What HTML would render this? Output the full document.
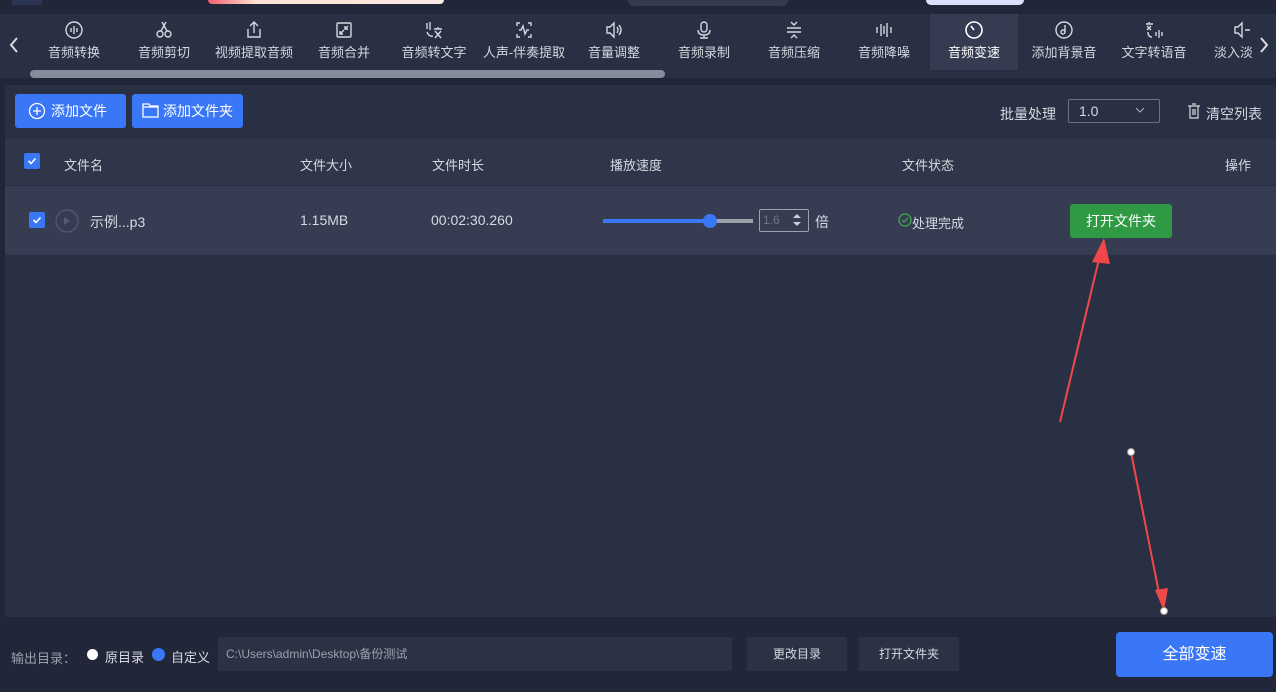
<!DOCTYPE html>
<html><head><meta charset="utf-8"><style>
*{margin:0;padding:0;box-sizing:border-box}
body{width:1276px;height:692px;background:#222639;font-family:"Liberation Sans","Noto Sans CJK SC",sans-serif;color:#d6d9e0;position:relative;overflow:hidden;font-size:13px}
.abs{position:absolute}
.tb{left:0;top:14px;width:1276px;height:64px;background:#2a3044}
.tab{position:absolute;top:0;height:56px;text-align:center;font-size:13px;color:#d4d7de}
.tab svg{display:block;margin:6px auto 2px;width:20px;height:20px}
.txt{white-space:nowrap}
</style></head><body>
<div class="abs" style="left:12px;top:0;width:30px;height:5px;background:#2a3352"></div>
<div class="abs" style="left:208px;top:0;width:236px;height:4px;background:linear-gradient(90deg,#f35f6a,#fbe2d2 20%,#fbe9e5);border-radius:0 0 6px 6px"></div>
<div class="abs" style="left:628px;top:0;width:160px;height:6px;background:#353a4c;border-radius:0 0 5px 5px"></div>
<div class="abs" style="left:926px;top:0;width:98px;height:5px;background:#d8e0fb;border-radius:0 0 5px 5px"></div>
<div class="abs tb">
<div class="abs" style="left:930px;top:0;width:88px;height:56px;background:#353c52"></div>
<svg class="abs" style="left:8px;top:22px" width="12" height="18" viewBox="0 0 12 18"><path d="M9 2L3 9l6 7" stroke="#d8dbe2" stroke-width="2" fill="none"/></svg>
<svg class="abs" style="left:1258px;top:22px" width="12" height="18" viewBox="0 0 12 18"><path d="M3 2l6 7-6 7" stroke="#d8dbe2" stroke-width="2" fill="none"/></svg>
<div class="tab" style="left:40px;width:68px"><svg viewBox="0 0 20 20" fill="none" stroke="#d4d7de" stroke-width="1.4"><circle cx="10" cy="10" r="8"/><path d="M7 8v4M10 6v8M13 8v4"/></svg><span class="txt">音频转换</span></div>
<div class="tab" style="left:130px;width:68px"><svg viewBox="0 0 20 20" fill="none" stroke="#d4d7de" stroke-width="1.4"><circle cx="6" cy="14" r="3"/><circle cx="14" cy="14" r="3"/><path d="M7 11L12 2M13 11L8 2"/></svg><span class="txt">音频剪切</span></div>
<div class="tab" style="left:206px;width:96px"><svg viewBox="0 0 20 20" fill="none" stroke="#d4d7de" stroke-width="1.4"><path d="M4 9v8h12V9M10 13V2M6 6l4-4 4 4"/></svg><span class="txt">视频提取音频</span></div>
<div class="tab" style="left:310px;width:68px"><svg viewBox="0 0 20 20" fill="none" stroke="#d4d7de" stroke-width="1.4"><rect x="3" y="3" width="14" height="14" rx="1"/><path d="M6 14l4-4M6 11v3h3M14 6l-3 3M11 6v3h3"/></svg><span class="txt">音频合并</span></div>
<div class="tab" style="left:398px;width:72px"><svg viewBox="0 0 20 20" fill="none" stroke="#d4d7de" stroke-width="1.4"><path d="M3 3v6M6 2v8M3 12q2 5 6 4M10 9h8M14 7v2M11 11l6 7M17 11l-6 7"/></svg><span class="txt">音频转文字</span></div>
<div class="tab" style="left:478px;width:92px"><svg viewBox="0 0 20 20" fill="none" stroke="#d4d7de" stroke-width="1.4"><path d="M3 6V3h3M14 3h3v3M3 14v3h3M17 14v3h-3M5 10h2l2-4 2 8 2-4h2"/></svg><span class="txt">人声-伴奏提取</span></div>
<div class="tab" style="left:580px;width:68px"><svg viewBox="0 0 20 20" fill="none" stroke="#d4d7de" stroke-width="1.4"><path d="M3 7h3l4-4v14l-4-4H3zM13 7q2 3 0 6M15 5q4 5 0 10"/></svg><span class="txt">音量调整</span></div>
<div class="tab" style="left:670px;width:68px"><svg viewBox="0 0 20 20" fill="none" stroke="#d4d7de" stroke-width="1.4"><rect x="7" y="2" width="6" height="10" rx="3"/><path d="M4 10q0 5 6 5t6-5M10 15v3M6 18h8"/></svg><span class="txt">音频录制</span></div>
<div class="tab" style="left:760px;width:68px"><svg viewBox="0 0 20 20" fill="none" stroke="#d4d7de" stroke-width="1.4"><path d="M7 2l3 3 3-3M3 8h14M3 12h14M7 18l3-3 3 3"/></svg><span class="txt">音频压缩</span></div>
<div class="tab" style="left:850px;width:68px"><svg viewBox="0 0 20 20" fill="none" stroke="#d4d7de" stroke-width="1.4"><path d="M3 7v6M7 4v12M10 6v8M13 3v14M17 7v6"/></svg><span class="txt">音频降噪</span></div>
<div class="tab" style="left:940px;width:68px;color:#fff"><svg viewBox="0 0 20 20" fill="none" stroke="#fff" stroke-width="1.6"><circle cx="10" cy="10" r="8"/><path d="M7 6l3 4"/></svg><span class="txt">音频变速</span></div>
<div class="tab" style="left:1026px;width:76px"><svg viewBox="0 0 20 20" fill="none" stroke="#d4d7de" stroke-width="1.4"><circle cx="10" cy="10" r="8"/><circle cx="9" cy="12" r="2"/><path d="M11 12V5"/></svg><span class="txt">添加背景音</span></div>
<div class="tab" style="left:1114px;width:80px"><svg viewBox="0 0 20 20" fill="none" stroke="#d4d7de" stroke-width="1.4"><path d="M5 2v2M2 4h7M3 6l4 4M7 6l-4 4M4 12q0 5 4 5M12 12v4M15 10v8M18 12v4"/></svg><span class="txt">文字转语音</span></div>
<div class="tab" style="left:1206px;width:46px;overflow:hidden;text-align:left;padding-left:8px"><svg viewBox="0 0 20 20" fill="none" stroke="#d4d7de" stroke-width="1.4" style="margin-left:18px"><path d="M3 7h3l4-4v14l-4-4H3zM13 10h5"/></svg><span class="txt">淡入淡出</span></div>
<div class="abs" style="left:30px;top:56px;width:635px;height:8px;background:#868c9c;border-radius:4px"></div>
</div>
<div class="abs" style="left:5px;top:85px;width:1271px;height:532px;background:#2a3043"></div>
<div class="abs" style="left:15px;top:94px;width:111px;height:34px;background:#3a77f7;border-radius:3px;color:#fff;font-size:14px;line-height:34px;padding-left:36px">添加文件</div>
<svg class="abs" style="left:28px;top:102px" width="18" height="18" viewBox="0 0 18 18" fill="none" stroke="#fff" stroke-width="1.3"><circle cx="9" cy="9" r="7.5"/><path d="M9 5v8M5 9h8"/></svg>
<div class="abs" style="left:132px;top:94px;width:111px;height:34px;background:#3a77f7;border-radius:3px;color:#fff;font-size:14px;line-height:34px;padding-left:31px">添加文件夹</div>
<svg class="abs" style="left:142px;top:102px" width="17" height="16" viewBox="0 0 17 16" fill="none" stroke="#fff" stroke-width="1.3"><path d="M1 2h6l1 2h8v11H1zM1 5h15"/></svg>
<div class="abs" style="left:1000px;top:104px;font-size:14px">批量处理</div>
<div class="abs" style="left:1068px;top:99px;width:92px;height:24px;border:1px solid #6b7183;border-radius:2px;padding-left:10px;line-height:22px;font-size:14px">1.0</div>
<svg class="abs" style="left:1135px;top:107px" width="10" height="7" viewBox="0 0 10 7"><path d="M1 1l4 4 4-4" stroke="#aab" fill="none"/></svg>
<svg class="abs" style="left:1187px;top:103px" width="14" height="16" viewBox="0 0 14 16" fill="none" stroke="#d6d9e0" stroke-width="1.2"><path d="M1 3h12M5 1h4M3 3v12h8V3M6 6v6M8 6v6"/></svg>
<div class="abs" style="left:1206px;top:104px;font-size:14px">清空列表</div>
<div class="abs" style="left:5px;top:139px;width:1271px;height:46px;background:#30364a"></div>
<div class="abs" style="left:24px;top:153px;width:16px;height:16px;background:#3a77f7;border-radius:2px"></div>
<svg class="abs" style="left:26px;top:155px" width="12" height="12" viewBox="0 0 12 12"><path d="M2.5 6l2.5 2.5L9.5 3.5" stroke="#fff" stroke-width="1.6" fill="none"/></svg>
<div class="abs" style="left:64px;top:155px">文件名</div>
<div class="abs" style="left:300px;top:155px">文件大小</div>
<div class="abs" style="left:432px;top:155px">文件时长</div>
<div class="abs" style="left:610px;top:155px">播放速度</div>
<div class="abs" style="left:902px;top:155px">文件状态</div>
<div class="abs" style="left:1225px;top:155px">操作</div>
<div class="abs" style="left:5px;top:186px;width:1271px;height:69px;background:#363d52"></div>
<div class="abs" style="left:29px;top:212px;width:16px;height:16px;background:#3a77f7;border-radius:2px"></div>
<svg class="abs" style="left:31px;top:214px" width="12" height="12" viewBox="0 0 12 12"><path d="M2.5 6l2.5 2.5L9.5 3.5" stroke="#fff" stroke-width="1.6" fill="none"/></svg>
<svg class="abs" style="left:55px;top:209px" width="24" height="24" viewBox="0 0 24 24"><circle cx="12" cy="12" r="11" stroke="#555c70" fill="none" stroke-width="1.2"/><path d="M9 8v8l6-4z" fill="#555c70"/></svg>
<div class="abs" style="left:90px;top:212px;font-size:14px">示例...p3</div>
<div class="abs" style="left:300px;top:212px;font-size:14px">1.15MB</div>
<div class="abs" style="left:431px;top:212px;font-size:14px">00:02:30.260</div>
<div class="abs" style="left:603px;top:219px;width:150px;height:4px;background:#9ca1ad"></div>
<div class="abs" style="left:603px;top:219px;width:107px;height:4px;background:#3a77f7"></div>
<div class="abs" style="left:703px;top:214px;width:14px;height:14px;background:#3a77f7;border-radius:50%"></div>
<div class="abs" style="left:759px;top:209px;width:50px;height:23px;border:1px solid #9ca1ad;border-radius:2px;color:#6f7586;font-size:12px;line-height:21px;padding-left:3px">1.6</div>
<svg class="abs" style="left:791px;top:211px" width="12" height="18" viewBox="0 0 12 18" fill="#ccd"><path d="M2 7l4-4 4 4zM2 11l4 4 4-4z"/></svg>
<div class="abs" style="left:815px;top:212px;font-size:14px">倍</div>
<svg class="abs" style="left:898px;top:213px" width="14" height="14" viewBox="0 0 14 14" fill="none" stroke="#3fae4e" stroke-width="1.2"><circle cx="7" cy="7" r="6"/><path d="M4 7l2 2 4-4"/></svg>
<div class="abs" style="left:912px;top:213px">处理完成</div>
<div class="abs" style="left:1070px;top:204px;width:102px;height:34px;background:#2f9a43;border-radius:3px;color:#fff;text-align:center;line-height:34px;font-size:14px">打开文件夹</div>
<div class="abs" style="left:11px;top:648px;color:#9aa0ad">输出目录：</div>
<div class="abs" style="left:87px;top:649px;width:11px;height:11px;background:#fff;border-radius:50%"></div>
<div class="abs" style="left:105px;top:647px">原目录</div>
<div class="abs" style="left:152px;top:648px;width:13px;height:13px;background:#3a77f7;border-radius:50%"></div>
<div class="abs" style="left:171px;top:647px">自定义</div>
<div class="abs" style="left:218px;top:637px;width:514px;height:34px;background:#2c3244;color:#9aa0ad;font-size:12px;line-height:34px;padding-left:8px">C:\Users\admin\Desktop\备份测试</div>
<div class="abs" style="left:747px;top:637px;width:100px;height:34px;background:#2c3244;text-align:center;line-height:34px;font-size:12px">更改目录</div>
<div class="abs" style="left:859px;top:637px;width:100px;height:34px;background:#2c3244;text-align:center;line-height:34px;font-size:12px">打开文件夹</div>
<div class="abs" style="left:1116px;top:632px;width:157px;height:45px;background:#3a77f7;border-radius:4px;color:#fff;text-align:center;line-height:45px;font-size:16px">全部变速</div>
<svg class="abs" style="left:0;top:0" width="1276" height="692" viewBox="0 0 1276 692">
<path d="M1060 422L1100 255" stroke="#f04848" stroke-width="2"/>
<path d="M1104 238L1092 262L1110 264Z" fill="#f04848"/>
<path d="M1131 452L1160 598" stroke="#f04848" stroke-width="2"/>
<path d="M1164 611L1155 590L1168 588Z" fill="#f04848"/>
<circle cx="1131" cy="452" r="3.5" fill="#fff" stroke="#999"/>
<circle cx="1164" cy="611" r="3.5" fill="#fff" stroke="#999"/>
</svg>
</body></html>
